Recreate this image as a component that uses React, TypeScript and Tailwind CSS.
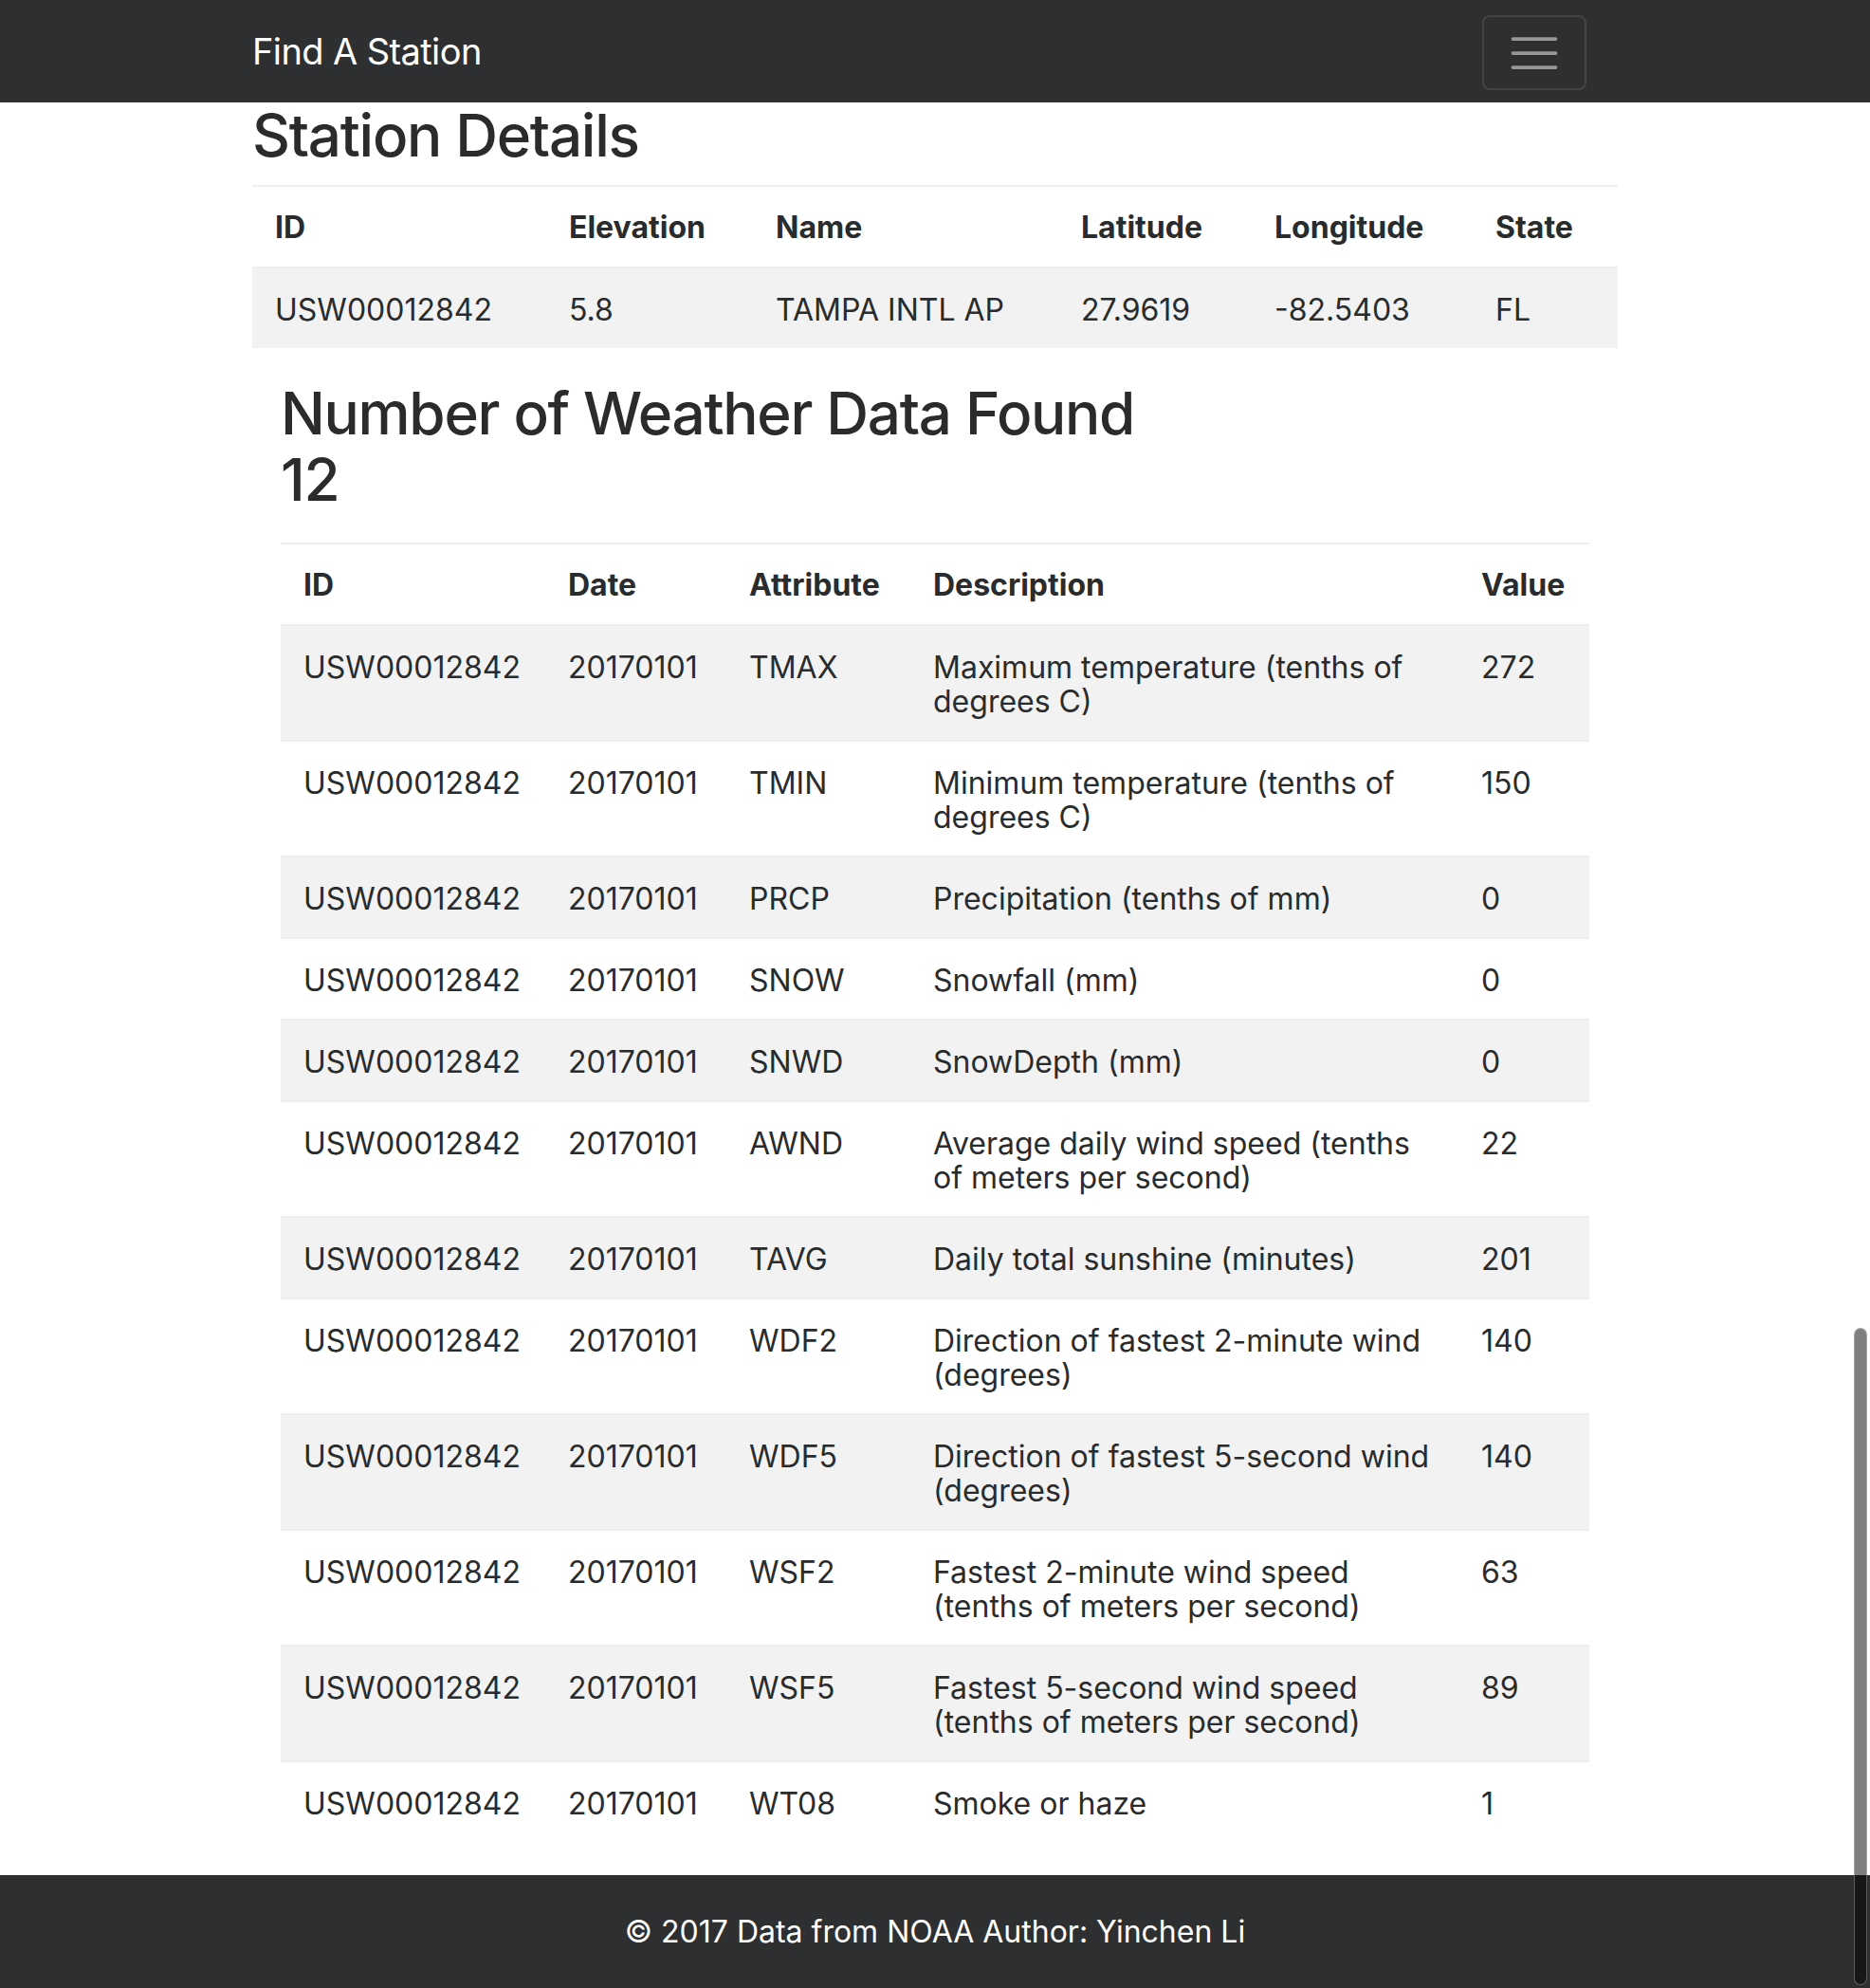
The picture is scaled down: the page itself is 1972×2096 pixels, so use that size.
import React from "react";

type Row = { id: string; date: string; attr: string; desc: string[]; value: string };

const rows: Row[] = [
  { id: "USW00012842", date: "20170101", attr: "TMAX", desc: ["Maximum temperature (tenths of", "degrees C)"], value: "272" },
  { id: "USW00012842", date: "20170101", attr: "TMIN", desc: ["Minimum temperature (tenths of", "degrees C)"], value: "150" },
  { id: "USW00012842", date: "20170101", attr: "PRCP", desc: ["Precipitation (tenths of mm)"], value: "0" },
  { id: "USW00012842", date: "20170101", attr: "SNOW", desc: ["Snowfall (mm)"], value: "0" },
  { id: "USW00012842", date: "20170101", attr: "SNWD", desc: ["SnowDepth (mm)"], value: "0" },
  { id: "USW00012842", date: "20170101", attr: "AWND", desc: ["Average daily wind speed (tenths", "of meters per second)"], value: "22" },
  { id: "USW00012842", date: "20170101", attr: "TAVG", desc: ["Daily total sunshine (minutes)"], value: "201" },
  { id: "USW00012842", date: "20170101", attr: "WDF2", desc: ["Direction of fastest 2-minute wind", "(degrees)"], value: "140" },
  { id: "USW00012842", date: "20170101", attr: "WDF5", desc: ["Direction of fastest 5-second wind", "(degrees)"], value: "140" },
  { id: "USW00012842", date: "20170101", attr: "WSF2", desc: ["Fastest 2-minute wind speed", "(tenths of meters per second)"], value: "63" },
  { id: "USW00012842", date: "20170101", attr: "WSF5", desc: ["Fastest 5-second wind speed", "(tenths of meters per second)"], value: "89" },
  { id: "USW00012842", date: "20170101", attr: "WT08", desc: ["Smoke or haze"], value: "1" },
];

const th = "border-t-2 border-[#eceeef] pl-[24px] pr-[12px] pt-[25px] pb-[23px] text-left align-top font-bold whitespace-nowrap";
const td = "border-t-2 border-[#eceeef] pl-[24px] pr-[12px] pt-[26px] pb-[22px] text-left align-top whitespace-nowrap";

export default function App() {
  return (
    <div className="relative min-h-[2096px] bg-white text-[#292b2c] font-['Inter',_'Liberation_Sans',_sans-serif]">
      <nav className="h-[108px] bg-[#2e2f31]">
        <div className="mx-auto flex h-full w-[1440px] items-center justify-between">
          <a className="text-[38px] leading-[60px] tracking-[-0.6px] text-white">Find A Station</a>
          <button className="mr-[33px] mt-[16px] flex h-[79px] w-[110px] items-center justify-center self-start rounded-[8px] border-2 border-white/10">
            <svg width="60" height="60" viewBox="0 0 32 32" fill="none">
              <path d="M4 8h24M4 16h24M4 24h24" stroke="rgba(255,255,255,0.5)" strokeWidth="2" strokeLinecap="round" />
            </svg>
          </button>
        </div>
      </nav>

      <main className="mx-auto w-[1440px]">
        <h2 className="mb-[17px] text-[62px] font-medium leading-[70px] tracking-[-1.3px]">Station Details</h2>
        <table className="mb-[34px] w-full table-fixed border-collapse text-[32px] leading-[36px]">
          <colgroup>
            <col className="w-[310px]" />
            <col className="w-[218px]" />
            <col className="w-[322px]" />
            <col className="w-[204px]" />
            <col className="w-[233px]" />
            <col className="w-[153px]" />
          </colgroup>
          <thead>
            <tr>
              <th className={th}>ID</th>
              <th className={th}>Elevation</th>
              <th className={th}>Name</th>
              <th className={th}>Latitude</th>
              <th className={th}>Longitude</th>
              <th className={th}>State</th>
            </tr>
          </thead>
          <tbody>
            <tr className="bg-[#f2f2f2]">
              <td className={td}>USW00012842</td>
              <td className={td}>5.8</td>
              <td className={td}>TAMPA INTL AP</td>
              <td className={td}>27.9619</td>
              <td className={td}>-82.5403</td>
              <td className={td}>FL</td>
            </tr>
          </tbody>
        </table>

        <div className="px-[30px]">
          <h2 className="mb-[31px] text-[62px] font-medium leading-[70px] tracking-[-1.3px]">
            Number of Weather Data Found
            <br />
            12
          </h2>
          <table className="mb-[35px] w-full table-fixed border-collapse text-[32px] leading-[36px]">
            <colgroup>
              <col className="w-[279px]" />
              <col className="w-[191px]" />
              <col className="w-[194px]" />
              <col className="w-[578px]" />
              <col className="w-[138px]" />
            </colgroup>
            <thead>
              <tr>
                <th className={th}>ID</th>
                <th className={th}>Date</th>
                <th className={th}>Attribute</th>
                <th className={th}>Description</th>
                <th className={th}>Value</th>
              </tr>
            </thead>
            <tbody>
              {rows.map((r, i) => (
                <tr key={r.attr} className={i % 2 === 0 ? "bg-[#f2f2f2]" : "bg-white"}>
                  <td className={td}>{r.id}</td>
                  <td className={td}>{r.date}</td>
                  <td className={td}>{r.attr}</td>
                  <td className={td}>
                    {r.desc.map((l) => (
                      <div key={l}>{l}</div>
                    ))}
                  </td>
                  <td className={td}>{r.value}</td>
                </tr>
              ))}
            </tbody>
          </table>
        </div>
      </main>

      <footer className="flex h-[120px] items-center justify-center bg-[#2e2f31] text-[32px] leading-[36px] text-white">
        © 2017 Data from NOAA Author: Yinchen Li
      </footer>

      <div className="absolute right-[3px] top-[1400px] h-[693px] w-[14px] rounded-full border border-white/30 bg-black/50" />
    </div>
  );
}
